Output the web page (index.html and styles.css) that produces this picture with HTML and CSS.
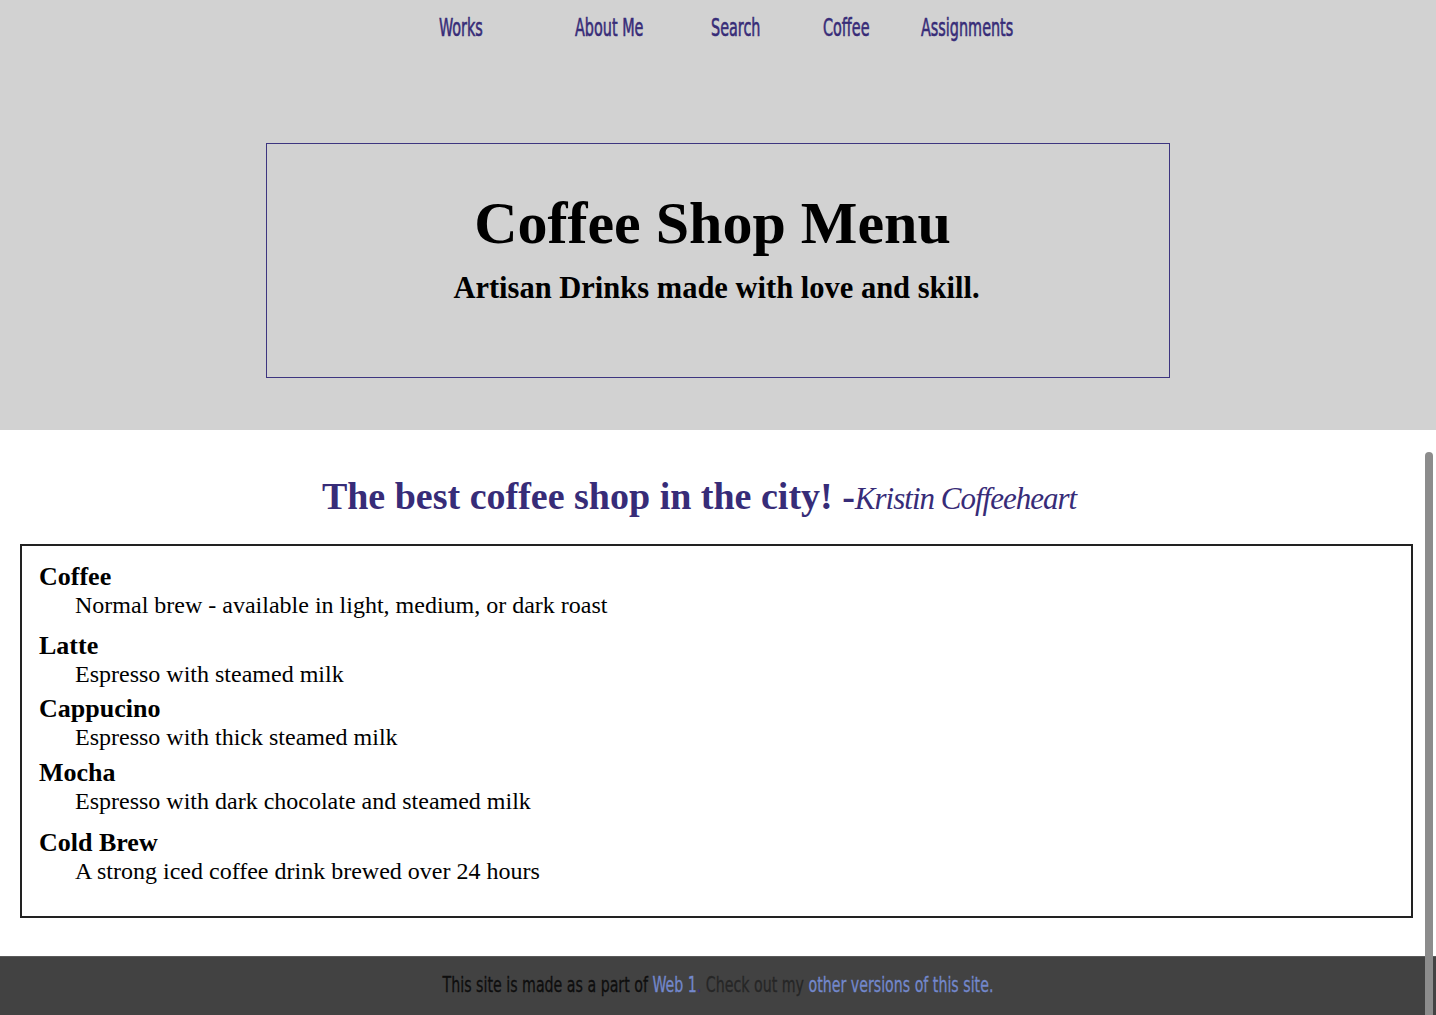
FILE: index.html
```html
<!DOCTYPE html>
<html lang="en">
<head>
<meta charset="utf-8">
<title>Coffee Shop Menu</title>
<link rel="stylesheet" href="styles.css">
</head>
<body>
<header class="site-header">
  <nav class="nav">
    <a class="nav-link" href="#">Works</a>
    <a class="nav-link" href="#">About Me</a>
    <a class="nav-link" href="#">Search</a>
    <a class="nav-link" href="#">Coffee</a>
    <a class="nav-link" href="#">Assignments</a>
  </nav>
  <div class="hero">
    <h1 class="hero-title">Coffee Shop Menu</h1>
    <h2 class="hero-sub">Artisan Drinks made with love and skill.</h2>
  </div>
</header>
<main class="content">
  <p class="quote">The best coffee shop in the city! -<em class="quote-author">Kristin Coffeeheart</em></p>
  <dl class="menu">
    <dt class="item">Coffee</dt>
    <dd class="desc gap-lg">Normal brew - available in light, medium, or dark roast</dd>
    <dt class="item">Latte</dt>
    <dd class="desc gap-sm">Espresso with steamed milk</dd>
    <dt class="item">Cappucino</dt>
    <dd class="desc gap-md">Espresso with thick steamed milk</dd>
    <dt class="item">Mocha</dt>
    <dd class="desc gap-xl">Espresso with dark chocolate and steamed milk</dd>
    <dt class="item">Cold Brew</dt>
    <dd class="desc">A strong iced coffee drink brewed over 24 hours</dd>
  </dl>
</main>
<footer class="footer">
  <p class="footer-text">This site is made as a part of <a class="footer-link" href="#">Web 1</a><span class="dot">.</span> <span class="muted">Check out my</span> <a class="footer-link" href="#">other versions of this site.</a></p>
</footer>
<div class="scroll-thumb"></div>
</body>
</html>
```
FILE: styles.css
```css
html, body {
  margin: 0;
  padding: 0;
  background: #ffffff;
}
body {
  font-family: "Liberation Serif", "Times New Roman", serif;
  color: #000;
  overflow: hidden;
  height: 1015px;
  position: relative;
}
.site-header {
  background: #d2d2d2;
  height: 430px;
  box-sizing: border-box;
  padding-top: 11px;
  display: flex;
  flex-direction: column;
  align-items: center;
}
.nav {
  display: grid;
  grid-template-columns: 136px 136px 112px 98px 90px;
  padding-left: 14px;
}
.nav-link {
  font-family: "DejaVu Sans Condensed", "DejaVu Sans", sans-serif;
  font-size: 25px;
  line-height: 34px;
  white-space: nowrap;
  color: #372c78;
  text-decoration: none;
  -webkit-text-stroke: 0.6px #372c78;
  transform: scaleX(0.64);
  transform-origin: left center;
}
.hero {
  margin-top: 98px;
  width: 904px;
  height: 235px;
  box-sizing: border-box;
  border: 1px solid #3d3580;
  text-align: center;
  padding-top: 46px;
}
.hero-title {
  margin: 0;
  padding-right: 11px;
  font-size: 60px;
  line-height: 66px;
  font-weight: bold;
}
.hero-sub {
  margin: 14px 0 0;
  padding-right: 3px;
  font-size: 30.5px;
  line-height: 36px;
  font-weight: bold;
}
.content {
  padding-top: 43px;
}
.quote {
  margin: 0 0 22px;
  text-align: center;
  color: #372c78;
  font-size: 38px;
  line-height: 46px;
  font-weight: bold;
  padding-right: 38px;
}
.quote-author {
  font-weight: normal;
  font-style: italic;
  font-size: 31px;
  letter-spacing: -1px;
}
.menu {
  margin: 0 23px 0 20px;
  border: 2px solid #222;
  padding: 17px 17px 32px;
  height: 374px;
  box-sizing: border-box;
}
.item {
  font-weight: bold;
  font-size: 26px;
  line-height: 28px;
}
.desc {
  margin: 0 0 0 36px;
  font-size: 24px;
  line-height: 28px;
}
.gap-sm { margin-bottom: 7px; }
.gap-md { margin-bottom: 8px; }
.gap-lg { margin-bottom: 13px; }
.gap-xl { margin-bottom: 14px; }
.footer {
  margin-top: 38px;
  background: #424242;
  border-top: 1px solid #5a5a5a;
  height: 80px;
  text-align: center;
}
.footer-text {
  margin: 0;
  padding-top: 13px;
  font-family: "DejaVu Sans Condensed", "DejaVu Sans", sans-serif;
  font-size: 22px;
  line-height: 30px;
  white-space: nowrap;
  color: #0e0e0e;
  -webkit-text-stroke: 0.3px currentColor;
  transform: scaleX(0.717);
  transform-origin: center center;
}
.footer-link {
  color: #7388cc;
  text-decoration: none;
}
.dot { color: #3a2f7b; }
.muted { color: #262626; }
.scroll-thumb {
  position: absolute;
  left: 1425px;
  top: 452px;
  width: 8px;
  height: 600px;
  border-radius: 4px;
  background: #8c8c8c;
}
```
